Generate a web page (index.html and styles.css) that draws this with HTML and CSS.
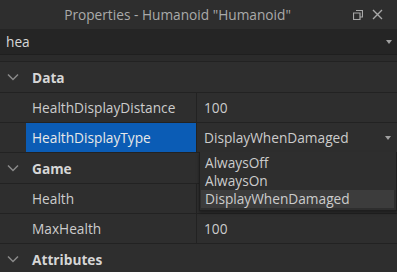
FILE: index.html
```html
<!DOCTYPE html>
<html>
<head>
  <title>Properties</title>
  <meta name="viewport" content="width=device-width, initial-scale=1">
  <link rel="stylesheet" href="styles.css">
</head>
<body>
  <div class="panel">
    <div class="titlebar">
      <span class="title">Properties - Humanoid "Humanoid"</span>
      <span class="win-icons">
        <svg width="10" height="10" viewBox="0 0 10 10"><path d="M3 0.5h6.5v6.5h-2.5M0.5 3h6.5v6.5h-6.5z" fill="none" stroke="#a8a8a8" stroke-width="1.2"/></svg>
        <svg width="11" height="11" viewBox="0 0 11 11"><path d="M1 1l9 9M10 1l-9 9" stroke="#a8a8a8" stroke-width="1.4"/></svg>
      </span>
    </div>
    <div class="search">
      <span>hea</span>
      <span class="arrow"></span>
    </div>
    <div class="spacer"></div>

    <div class="row header">
      <span class="chev"><svg width="12" height="8" viewBox="0 0 12 8"><path d="M1 1.5l5 5 5-5" fill="none" stroke="#8a8a8a" stroke-width="1.5"/></svg></span>
      <span>Data</span>
    </div>
    <div class="row prop">
      <span class="indent"></span>
      <span class="name">HealthDisplayDistance</span>
      <span class="value">100</span>
    </div>
    <div class="row prop">
      <span class="indent"></span>
      <span class="name selected">HealthDisplayType</span>
      <span class="value">DisplayWhenDamaged<span class="arrow"></span></span>
      <div class="menu">
        <div class="item">AlwaysOff</div>
        <div class="item">AlwaysOn</div>
        <div class="item hover">DisplayWhenDamaged</div>
      </div>
    </div>
    <div class="row header">
      <span class="chev"><svg width="12" height="8" viewBox="0 0 12 8"><path d="M1 1.5l5 5 5-5" fill="none" stroke="#8a8a8a" stroke-width="1.5"/></svg></span>
      <span>Game</span>
    </div>
    <div class="row prop">
      <span class="indent"></span>
      <span class="name">Health</span>
      <span class="value"></span>
    </div>
    <div class="row prop">
      <span class="indent"></span>
      <span class="name">MaxHealth</span>
      <span class="value">100</span>
    </div>
    <div class="row header">
      <span class="chev"><svg width="12" height="8" viewBox="0 0 12 8"><path d="M1 1.5l5 5 5-5" fill="none" stroke="#8a8a8a" stroke-width="1.5"/></svg></span>
      <span>Attributes</span>
    </div>
  </div>
</body>
</html>
```

FILE: styles.css
```css
body { margin: 0; background-color: #2e2e2e; font-family: "Open Sans", sans-serif; font-size: 13.7px; color: #cccccc; overflow: hidden; }
.panel { width: 397px; height: 272px; display: flex; flex-direction: column; }
.titlebar { height: 29px; flex: none; display: flex; align-items: center; background-color: #2e2e2e; color: #aaaaaa; }
.title { flex: 1; text-align: center; padding-left: 2px; }
.win-icons { width: 44px; display: flex; gap: 9px; align-items: center; }
.search { height: 25px; flex: none; display: flex; align-items: center; justify-content: space-between; padding: 0 5px 0 6px; background-color: #252525; color: #d8d8d8; border-bottom: 1px solid #1f1f1f; }
.arrow { width: 0; height: 0; border-left: 3px solid transparent; border-right: 3px solid transparent; border-top: 4px solid #a0a0a0; }
.spacer { height: 6px; flex: none; background-color: #2b2b2b; border-bottom: 1px solid #222222; }
.row { flex: none; display: flex; align-items: stretch; border-bottom: 1px solid #222222; position: relative; }
.header { height: 30px; align-items: center; font-weight: bold; color: #d6d6d6; }
.chev { width: 32px; display: flex; justify-content: center; padding-right: 6px; box-sizing: border-box; }
.prop { height: 29px; }
.indent { width: 26px; flex: none; }
.name { width: 171px; flex: none; display: flex; align-items: center; padding-left: 6px; box-sizing: border-box; border-right: 1px solid #222222; }
.name.selected { background-color: #0b5cb5; color: #e8e8e8; }
.value { flex: 1; display: flex; align-items: center; justify-content: space-between; padding: 0 6px 0 7px; }
.menu { position: absolute; left: 199px; top: 29px; right: 0; padding: 2px 2px 2px 1px; background-color: #2e2e2e; border: 1px solid #1e1e1e; border-top: none; box-shadow: 0 2px 3px rgba(0, 0, 0, 0.35); z-index: 2; }
.item { height: 18px; line-height: 18px; padding-left: 4px; }
.item.hover { background-color: #3c3c3c; }
```
